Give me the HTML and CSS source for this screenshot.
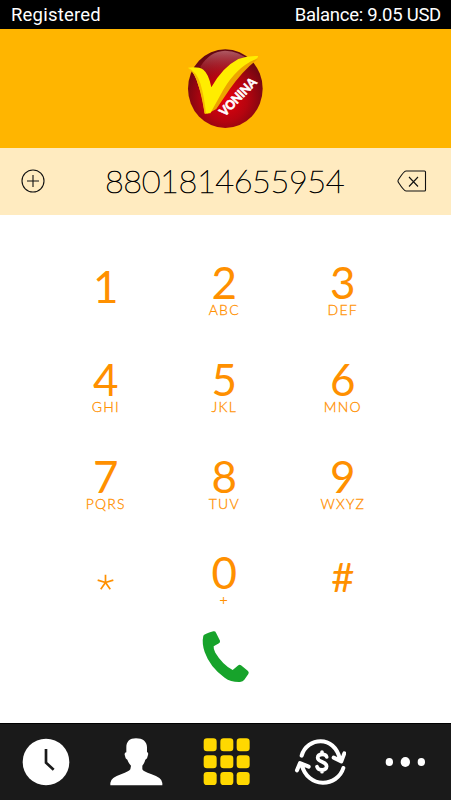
FILE: index.html
```html
<!DOCTYPE html>
<html lang="en">
<head>
  <meta charset="UTF-8">
  <meta name="viewport" content="width=device-width, initial-scale=1">
  <title>Vonina Dialer</title>
  <link rel="stylesheet" href="styles.css">
</head>
<body>

<div class="status">
  <span>Registered</span>
  <span class="balance">Balance: 9.05 USD</span>
</div>

<header class="header">
  <svg class="logo" viewBox="0 0 300 300">
    <defs>
      <radialGradient id="ball" cx="50%" cy="62%" r="60%">
        <stop offset="0" stop-color="#e8000c"/>
        <stop offset="0.5" stop-color="#b5040f"/>
        <stop offset="1" stop-color="#640812"/>
      </radialGradient>
      <linearGradient id="shine" x1="0" y1="0" x2="0" y2="1">
        <stop offset="0" stop-color="#e0919a" stop-opacity="0.6"/>
        <stop offset="1" stop-color="#b00010" stop-opacity="0.1"/>
      </linearGradient>
    </defs>
    <ellipse cx="151" cy="146" rx="112" ry="118" fill="url(#ball)"/>
    <path d="M76 80Q104 34 150 32Q194 33 222 62Q180 82 150 120Q100 128 76 80Z" fill="url(#shine)"/>
    <path d="M90 221L128 148Q178 70 249 57Q206 88 164 148L124 207L98 221Z" fill="#eda400"/>
    <path d="M39 83Q70 79 85 89Q101 101 109 142Q142 82 190 57Q220 46 249 48Q250 56 236 60Q184 84 145 149L106 220H89Q82 168 71 139Q60 97 39 83Z" fill="#ffed00"/>
    <path d="M39 83Q65 95 76 130Q87 165 93 221H89Q80 168 71 139Q60 97 39 83Z" fill="#f6bd00"/>
    <text class="logo-text" x="0" y="0" transform="translate(149 231) rotate(-46)" textLength="142" lengthAdjust="spacingAndGlyphs">VONINA</text>
  </svg>
</header>

<div class="number-bar">
  <svg class="icon-add" viewBox="0 0 24 24">
    <circle cx="12" cy="12" r="11"/>
    <path d="M12 6v12M6 12h12"/>
  </svg>
  <span class="number">8801814655954</span>
  <svg class="icon-delete" viewBox="0 0 30 22">
    <path d="M9 1h18.500q1 0 1 1v18q0 1-1 1H9Q7 21 1.500 12.500q-1-1.500 0-3Q7 1 9 1ZM12 7l9 9.500M21 7l-9 9.500"/>
  </svg>
</div>

<main class="keypad">
  <div class="key key-one"><b>1</b></div>
  <div class="key"><b>2</b><small>ABC</small></div>
  <div class="key"><b>3</b><small>DEF</small></div>
  <div class="key"><b>4</b><small>GHI</small></div>
  <div class="key"><b>5</b><small>JKL</small></div>
  <div class="key"><b>6</b><small>MNO</small></div>
  <div class="key"><b>7</b><small>PQRS</small></div>
  <div class="key"><b>8</b><small>TUV</small></div>
  <div class="key"><b>9</b><small>WXYZ</small></div>
  <div class="key key-star">
    <svg viewBox="0 0 50 50">
      <path d="M25 25V2M25 25L2 18M25 25L48 18M25 25L11 45M25 25L39 45"/>
    </svg>
  </div>
  <div class="key"><b>0</b><small>+</small></div>
  <div class="key key-hash"><b>#</b></div>
</main>

<div class="call">
  <svg viewBox="0 0 210 210">
    <path d="M70 34Q76 33 78 38L90 62Q91 67 87 70L71 79Q70 89 76 98Q97 133 128 150L145 136Q149 133 153 136L174 153Q178 157 175 162L163 179Q159 185 150 186Q123 187 104 173Q60 142 44 96Q35 69 40 47Q42 42 70 34Z"/>
  </svg>
</div>

<nav class="tabs">
  <svg viewBox="0 0 180 180">
    <circle cx="93" cy="90" r="70" fill="#fff"/>
    <path d="M93 51V92L116 113" fill="none" stroke="#1a1a1a" stroke-width="8"/>
  </svg>
  <svg viewBox="0 0 180 180">
    <path d="M93 19C113 19 126 29 126 46V61Q131 61 129 69L126 79Q124 82 121 83Q118 94 112 101V112Q115 119 138 126Q172 137 172 153V160H16V153Q16 137 50 126Q71 119 76 112L78 101Q71 94 67 83Q64 82 62 79L59 68Q58 61 64 61V46C64 29 74 19 93 19Z" fill="#fff"/>
  </svg>
  <svg viewBox="0 0 180 180" fill="#ffd800">
    <rect x="26" y="19" width="39" height="39" rx="10"/>
    <rect x="76" y="19" width="39" height="39" rx="10"/>
    <rect x="125" y="19" width="39" height="39" rx="10"/>
    <rect x="26" y="70" width="39" height="39" rx="10"/>
    <rect x="76" y="70" width="39" height="39" rx="10"/>
    <rect x="125" y="70" width="39" height="39" rx="10"/>
    <rect x="26" y="120" width="39" height="39" rx="10"/>
    <rect x="76" y="120" width="39" height="39" rx="10"/>
    <rect x="125" y="120" width="39" height="39" rx="10"/>
  </svg>
  <svg viewBox="0 0 180 180" fill="none" stroke="#fff" stroke-linecap="round" stroke-linejoin="round">
    <path d="M47 71C63 16 145 7 162 82M143 77L166 88L175 64M172 108C155 165 65 173 46 95M33 115L42 93L68 104" stroke-width="12"/>
    <path d="M122 75C120 65 96 63 95 77C95 92 122 86 122 103C122 117 97 117 93 104M108 60V66M108 115V119" stroke-width="11"/>
  </svg>
  <svg viewBox="0 0 180 180" fill="#fff">
    <ellipse cx="40" cy="90" rx="11" ry="12"/>
    <ellipse cx="88" cy="90" rx="14" ry="15"/>
    <ellipse cx="136" cy="90" rx="11" ry="12"/>
  </svg>
</nav>

</body>
</html>
```

FILE: styles.css
```css
* {
  box-sizing: border-box;
}
body {
  margin: 0;
  height: 800px;
  display: flex;
  flex-direction: column;
  background: #fff;
  font-family: Lato, sans-serif;
  overflow: hidden;
}
.status {
  height: 29px;
  padding: 1px 10px 0 11px;
  display: flex;
  justify-content: space-between;
  align-items: center;
  background: #000;
  color: #fff;
  font: 18.5px/28px Roboto, sans-serif;
}
.status span {
  letter-spacing: 0.2px;
}
.status .balance {
  letter-spacing: -0.26px;
}
.header {
  height: 119px;
  padding-top: 11px;
  background: #ffb500;
  text-align: center;
}
.logo {
  width: 100px;
  height: 100px;
  margin-right: 1px;
}
.logo-text {
  font: bold 38px Lato, sans-serif;
  fill: #fff;
  stroke: #fff;
  stroke-width: 2px;
}
.number-bar {
  height: 67px;
  padding: 0 24px 1px 21px;
  display: flex;
  justify-content: space-between;
  align-items: center;
  background: #ffebc0;
}
.number-bar svg {
  fill: none;
  stroke: #111;
  stroke-width: 1.1;
}
.icon-add {
  width: 24px;
  height: 24px;
}
.icon-delete {
  width: 30px;
  height: 22px;
}
.number {
  padding-left: 7px;
  font-size: 32.5px;
  font-weight: 200;
  line-height: 66px;
  letter-spacing: -0.45px;
  -webkit-text-stroke: 0.7px #000;
}
.keypad {
  margin: 45px 49px 0 46.5px;
  display: grid;
  grid-template-columns: repeat(3, 118.5px);
  grid-auto-rows: 96.8px;
  color: #ff9000;
}
.key {
  display: flex;
  flex-direction: column;
  align-items: center;
}
.key b {
  font-size: 44px;
  font-weight: 400;
  line-height: 44px;
}
.key small {
  margin-top: -1px;
  font-size: 14px;
  font-weight: 300;
  line-height: 14px;
  letter-spacing: 1.2px;
  -webkit-text-stroke: 0.3px #ff9000;
}
.key-one {
  padding-top: 4px;
}
.key-hash {
  padding-top: 5px;
}
.key-hash b {
  font-size: 40px;
}
.key-star {
  padding-top: 24px;
}
.key-star svg {
  width: 17px;
  height: 17px;
  fill: none;
  stroke: #ff9000;
  stroke-width: 5;
}
.call {
  height: 70px;
  margin-top: -27px;
  text-align: center;
}
.call svg {
  width: 70px;
  height: 70px;
  margin-right: 2px;
  fill: #17a32b;
}
.tabs {
  height: 77px;
  margin-top: auto;
  padding: 8px 0;
  border-top: 1px solid #000;
  display: flex;
  justify-content: space-around;
  background: #1a1a1a;
}
.tabs svg {
  width: 60px;
  height: 60px;
}
```
